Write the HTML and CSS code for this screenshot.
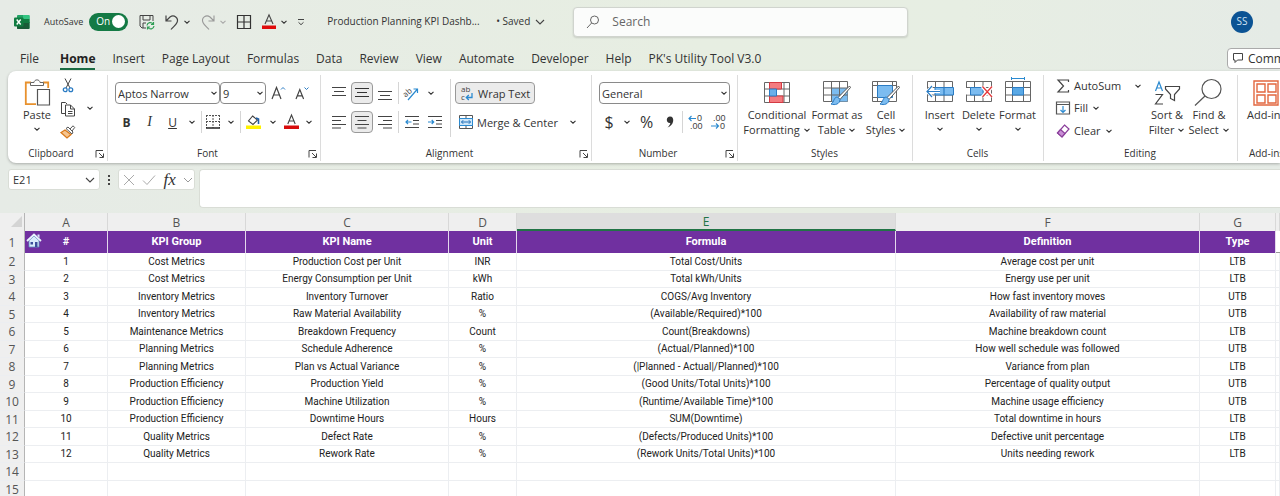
FILE: index.html
```html
<!DOCTYPE html>
<html lang="en">
<head>
<meta charset="utf-8">
<title>Production Planning KPI Dashboard</title>
<link rel="stylesheet" href="styles.css">
</head>
<body>
<svg class="defs" aria-hidden="true">
  <symbol id="chev" viewBox="0 0 8 8"><path d="M1.500 2.800 4 5.200 6.500 2.800" fill="none" stroke="currentColor" stroke-width="1.100"/></symbol>
  <symbol id="launch" viewBox="0 0 10 10"><path d="M1 8.500V1.500H8M4 4l4 4M8.500 4.500v4h-4" fill="none" stroke="currentColor" stroke-width="1"/></symbol>
  <symbol id="lines-c" viewBox="0 0 14 14"><path d="M0 2.500h14M2 6.500h10M0 10.500h14" stroke="currentColor"/></symbol>
</svg>

<header class="titlebar">
  <svg class="logo" width="16" height="16" viewBox="0 0 16 16"><rect x="3" y="1" width="12.500" height="14" rx="1" fill="#21a366"/><path d="M3 8h12.500v6a1 1 0 0 1-1 1H4a1 1 0 0 1-1-1z" fill="#185c37"/><path d="M9 1h5.500a1 1 0 0 1 1 1v3H9z" fill="#33c481"/><path d="M9 5h6.500v4H9z" fill="#107c41"/><rect y="3.500" width="9.500" height="9" rx="1" fill="#107c41"/><path d="M2.700 5.500l4 5M6.700 5.500l-4 5" stroke="#fff" stroke-width="1.400"/></svg>
  <label class="autosave"><span>AutoSave</span><span class="switch"><input type="checkbox" checked><span class="on">On</span></span></label>
  <div class="quick">
    <button aria-label="Save"><svg width="16" height="16" viewBox="0 0 16 16" fill="none" stroke="#444"><path d="M7 14H3L1 12V1.500h13V7M4 1.500V6h7V1.500M4 14V9h3"/><path d="M8 11.500a3.300 3.300 0 0 1 6-1.500M14.500 8v2.500H12M15 12a3.300 3.300 0 0 1-6 1.500M8.500 15.500V13H11" stroke="#2f9e55" stroke-width="1.200"/></svg></button>
    <button class="undo" aria-label="Undo"><svg width="16" height="16" viewBox="0 0 16 16" fill="none" stroke="#444" stroke-width="1.200"><path d="M2 1.500V7h5.500M2 7l4-4c4-3 9 1 7 5.500C12 11 9 13 7 15.500"/></svg><svg class="chev"><use href="#chev"/></svg></button>
    <button class="redo" aria-label="Redo"><svg width="16" height="16" viewBox="0 0 16 16" fill="none" stroke="#999" stroke-width="1.100"><path d="M14 1.500V7H8.500M14 7l-4-4C6 0 1 4 3 8.500 4 11 7 13 9 15.500"/></svg><svg class="chev"><use href="#chev"/></svg></button>
    <button aria-label="Borders"><svg width="16" height="16" viewBox="0 0 16 16" fill="none" stroke="#333" stroke-width="1.200"><path d="M1.500 1.500h13v13h-13zM8 1.500v13M1.500 8h13"/></svg></button>
    <button class="fontc" aria-label="Font color"><svg width="16" height="16" viewBox="0 0 16 16"><path d="M4 10 8 .8l4 9.200M5.400 7h5.200" fill="none" stroke="#444" stroke-width="1.100"/><path d="M1 11.500h14v3.500H1z" fill="#e00b0b"/></svg><svg class="chev"><use href="#chev"/></svg></button>
    <button aria-label="Customize toolbar"><svg width="8" height="10" viewBox="0 0 8 10" fill="none" stroke="#444"><path d="M1 2.500h6M1.500 5.300 4 7.700l2.500-2.400"/></svg></button>
  </div>
  <button class="doc">Production Planning KPI Dashb...<span>• Saved</span><svg width="10" height="8" viewBox="0 0 10 8"><path d="M1 2l4 4 4-4" fill="none" stroke="#444" stroke-width="1.100"/></svg></button>
  <label class="search"><svg width="14" height="14" viewBox="0 0 14 14" fill="none" stroke="#666"><circle cx="8.500" cy="5" r="4"/><path d="M5.600 8 1 13"/></svg><input type="search" placeholder="Search" aria-label="Search"></label>
  <button class="avatar">SS</button>
</header>

<nav class="tabs">
  <a href="#file">File</a><a href="#home" class="current">Home</a><a href="#insert">Insert</a><a href="#layout">Page Layout</a><a href="#formulas">Formulas</a><a href="#data">Data</a><a href="#review">Review</a><a href="#view">View</a><a href="#automate">Automate</a><a href="#developer">Developer</a><a href="#help">Help</a><a href="#pk">PK's Utility Tool V3.0</a>
  <button class="comments"><svg width="12" height="12" viewBox="0 0 12 12"><path d="M1.500 1.500h9v6.500H5.500L3 10.500V8H1.500z" fill="none" stroke="#444"/></svg>Comments</button>
</nav>

<main>
<section class="ribbon" aria-label="Home ribbon">
  <div class="group g-clip">
    <div class="body">
      <button class="big paste"><svg width="26" height="28" viewBox="0 0 26 28"><path d="M7 3.500H1.800v21.700H12" fill="none" stroke="#e8912d" stroke-width="1.800"/><path d="M19 3.500h5.200V9" fill="none" stroke="#e8912d" stroke-width="1.800"/><path d="M6.500 6.500V3.500H10c.3-3.500 5.700-3.500 6 0h3.500v3z" fill="#fff" stroke="#666"/><path d="M13.500 10.500h12v15.500h-12z" fill="#fff" stroke="#555" stroke-width="1.200"/></svg><span>Paste</span><svg class="chev"><use href="#chev"/></svg></button>
      <div class="stack">
        <button aria-label="Cut"><svg width="12" height="15" viewBox="0 0 12 15" fill="none"><path d="M3 .5 8 10M9 .5 4 10" stroke="#444"/><circle cx="3.200" cy="11.800" r="1.900" stroke="#2b7cc4" stroke-width="1.300"/><circle cx="8.800" cy="11.800" r="1.900" stroke="#2b7cc4" stroke-width="1.300"/></svg></button>
        <button aria-label="Copy"><svg width="16" height="16" viewBox="0 0 16 16" fill="#fff" stroke="#444"><path d="M5 12.500H1.500v-11h4L7 3"/><path d="M5.500 4h5l4 4v7h-9zM10.500 4v4h4M8 10.500h4.500M8 12.500h4.500"/></svg></button>
        <button aria-label="Format painter"><svg width="16" height="14" viewBox="0 0 16 14"><path d="M10 4l3-3.200 1.700 1.700L12 6M6 3.500l6 5.500 1-2-5-5z" fill="#fff" stroke="#555"/><path d="M5 5 1 7.500l6 5.500 4-3.500z" fill="#f6c58f" stroke="#d97b1e" stroke-width="1.300"/></svg></button>
      </div>
      <button class="chev-btn" aria-label="Copy options"><svg class="chev"><use href="#chev"/></svg></button>
    </div>
    <div class="foot"><span>Clipboard</span><button aria-label="Clipboard settings"><svg class="launch"><use href="#launch"/></svg></button></div>
  </div>

  <div class="group g-font">
    <div class="body rows">
      <div class="row">
        <span class="pick fontname"><select aria-label="Font"><option>Aptos Narrow</option></select><svg class="chev"><use href="#chev"/></svg></span>
        <span class="pick fontsize"><select aria-label="Font size"><option>9</option></select><svg class="chev"><use href="#chev"/></svg></span>
        <button class="w24" aria-label="Increase font size"><svg width="15" height="16" viewBox="0 0 15 16" fill="none"><path d="M1 14 5.500 2.500 10 14M2.600 10h5.800" stroke="#444" stroke-width="1.200"/><path d="M10 4.500 12 2.500l2 2" stroke="#2b7cc4"/></svg></button>
        <button class="w24" aria-label="Decrease font size"><svg width="14" height="16" viewBox="0 0 14 16" fill="none"><path d="M1 14 4.800 4.500 8.600 14M2.400 10.800h4.800" stroke="#444" stroke-width="1.200"/><path d="M9.500 2.500l2 2 2-2" stroke="#2b7cc4"/></svg></button>
      </div>
      <div class="row">
        <button class="w23 bold">B</button><button class="w23 ital">I</button><button class="w23 under">U</button><button class="w16" aria-label="Underline style"><svg class="chev"><use href="#chev"/></svg></button>
        <i class="bar"></i>
        <button class="w20" aria-label="Borders"><svg width="14" height="14" viewBox="0 0 14 14" stroke="#555"><path d="M0 .5h14M.5 0v13M13.500 0v13M7 0v13M0 6.500h14" stroke-dasharray="2 1"/><path d="M0 13h14" stroke-width="1.600" stroke="#222"/></svg></button><button class="w16" aria-label="Border style"><svg class="chev"><use href="#chev"/></svg></button>
        <i class="bar"></i>
        <button class="w23" aria-label="Fill color"><svg width="15" height="16" viewBox="0 0 15 16"><path d="M7 1.500 2.500 7 7 10.500 11.500 6 6.500 2" fill="none" stroke="#444" stroke-width="1.100"/><path d="M10 4l2.500 1v5" fill="none" stroke="#1f5fa8" stroke-width="1.600"/><path d="M0 11.500h15V15H0z" fill="#fff200"/></svg></button><button class="w16" aria-label="Choose fill"><svg class="chev"><use href="#chev"/></svg></button>
        <button class="w20" aria-label="Font color"><svg width="15" height="16" viewBox="0 0 15 16"><path d="M3.800 10 7.500 1l3.700 9M5 7h5" fill="none" stroke="#444" stroke-width="1.100"/><path d="M0 11.500h15V15H0z" fill="#d80c0c"/></svg></button><button class="w16" aria-label="Choose font color"><svg class="chev"><use href="#chev"/></svg></button>
      </div>
    </div>
    <div class="foot"><span>Font</span><button aria-label="Font settings"><svg class="launch"><use href="#launch"/></svg></button></div>
  </div>

  <div class="group g-align">
    <div class="body">
      <div class="rows">
        <div class="row">
          <button class="sq" aria-label="Top align"><svg width="14" height="14" viewBox="0 0 14 14" stroke="#444"><path d="M0 1.500h14M2 5.500h10M0 9.500h14"/></svg></button>
          <button class="sq pressed" aria-label="Middle align"><svg width="14" height="14"><use href="#lines-c"/></svg></button>
          <button class="sq" aria-label="Bottom align"><svg width="14" height="14" viewBox="0 0 14 14" stroke="#444"><path d="M0 5.500h14M2 9.500h10M0 13.500h14"/></svg></button>
          <i class="bar"></i>
          <button class="w23" aria-label="Orientation"><svg width="17" height="16" viewBox="0 0 17 16"><text x="0" y="10" class="tiny" transform="rotate(-42 5 8)">ab</text><path d="M5 15 14.500 4M10.500 4h4v4" fill="none" stroke="#2b8ad0" stroke-width="1.200"/></svg></button><button class="w16" aria-label="Orientation options"><svg class="chev"><use href="#chev"/></svg></button>
        </div>
        <div class="row">
          <button class="sq" aria-label="Align left"><svg width="14" height="14" viewBox="0 0 14 14" stroke="#444"><path d="M0 1.500h14M0 5.500h9M0 9.500h14M0 13h9"/></svg></button>
          <button class="sq pressed" aria-label="Center"><svg width="14" height="14" viewBox="0 0 14 14" stroke="#444"><path d="M0 1.500h14M2.500 5.500h9M0 9.500h14M2.500 13h9"/></svg></button>
          <button class="sq" aria-label="Align right"><svg width="14" height="14" viewBox="0 0 14 14" stroke="#444"><path d="M0 1.500h14M5 5.500h9M0 9.500h14M5 13h9"/></svg></button>
          <i class="bar"></i>
          <button class="w23" aria-label="Decrease indent"><svg width="14" height="14" viewBox="0 0 14 14" fill="none" stroke="#444"><path d="M0 1.500h14M8 5.500h6M8 9h6M0 12.500h14"/><path d="M6.500 7H1M3 5 1 7l2 2" stroke="#2b8ad0" stroke-width="1.200"/></svg></button>
          <button class="w23" aria-label="Increase indent"><svg width="14" height="14" viewBox="0 0 14 14" fill="none" stroke="#444"><path d="M0 1.500h14M8 5.500h6M8 9h6M0 12.500h14"/><path d="M0 7h5.500M3.700 5l2 2-2 2" stroke="#2b8ad0" stroke-width="1.200"/></svg></button>
        </div>
      </div>
      <i class="bar tall"></i>
      <div class="rows wrapcol">
        <div class="row"><button class="textbtn pressed"><svg width="14" height="16" viewBox="0 0 14 16"><text x="1" y="7" class="tiny">ab</text><text x="1" y="15" class="tiny">c</text><path d="M12 8v4.500H6.500M8.800 10l-2.500 2.500L8.800 15" fill="none" stroke="#2b8ad0" stroke-width="1.300"/></svg>Wrap Text</button></div>
        <div class="row"><button class="textbtn"><svg width="14" height="14" viewBox="0 0 14 14"><path d="M.5.5h13v13H.5zM7 .5v13" fill="#fff" stroke="#555"/><path d="M.5 3.500h13v7H.5z" fill="#cfe6f8" stroke="#2b8ad0"/><path d="M2.500 7h9M4.200 5.200 2.500 7l1.700 1.800M9.800 5.200 11.500 7 9.800 8.800" fill="none" stroke="#1e6fb8"/></svg>Merge &amp; Center</button><button class="w16" aria-label="Merge options"><svg class="chev"><use href="#chev"/></svg></button></div>
      </div>
    </div>
    <div class="foot"><span>Alignment</span><button aria-label="Alignment settings"><svg class="launch"><use href="#launch"/></svg></button></div>
  </div>

  <div class="group g-num">
    <div class="body rows">
      <div class="row"><span class="pick numfmt"><select aria-label="Number format"><option>General</option></select><svg class="chev"><use href="#chev"/></svg></span></div>
      <div class="row">
        <button class="w20 sym">$</button><button class="w16" aria-label="Currency options"><svg class="chev"><use href="#chev"/></svg></button><button class="w23 sym">%</button><button class="w23" aria-label="Comma style"><svg width="8" height="12" viewBox="0 0 8 12"><path d="M4 .5C6.500.5 7.500 2.500 7.200 5 6.800 8 4.500 10.500 1.500 11.500c1.500-1.500 2.600-3 2.800-4.500C2 7.300.8 5.500.8 3.800.8 2 2.200.5 4 .5z" fill="#333"/></svg></button>
        <i class="bar"></i>
        <button class="w23" aria-label="Increase decimal"><svg width="15" height="16" viewBox="0 0 15 16"><text x="9" y="7" class="digit">0</text><text x="2" y="15" class="digit">.00</text><path d="M8 4.500H1M3.500 2 1 4.500 3.500 7" fill="none" stroke="#2b8ad0" stroke-width="1.100"/></svg></button>
        <button class="w23" aria-label="Decrease decimal"><svg width="15" height="16" viewBox="0 0 15 16"><text x="2" y="7" class="digit">.00</text><text x="9" y="15" class="digit">0</text><path d="M0 12h7.500M5 9.500 7.500 12 5 14.500" fill="none" stroke="#2b8ad0" stroke-width="1.100"/></svg></button>
      </div>
    </div>
    <div class="foot"><span>Number</span><button aria-label="Number settings"><svg class="launch"><use href="#launch"/></svg></button></div>
  </div>

  <div class="group g-styles">
    <div class="body">
      <button class="big w62"><svg width="26" height="24" viewBox="0 0 26 24"><path d="M.5 1.500h25v20H.5zM.5 8h25M.5 15h25M5.500 1.500v20M20 1.500v20" fill="#fff" stroke="#666"/><path d="M5.500 1.500h12V8h-12zM5.500 15H19v6.500H5.500z" fill="#f47c80" stroke="#d33a42"/><path d="M5.500 8h7v7h-7z" fill="#6ab0ea" stroke="#2b7cc4"/></svg><span>Conditional<br>Formatting <svg class="chev"><use href="#chev"/></svg></span></button>
      <button class="big w56"><svg width="28" height="26" viewBox="0 0 28 26"><path d="M.5 1.500h24v20H.5z" fill="#fff" stroke="#666"/><path d="M8.500 8h16v13.500h-16z" fill="#7cbcf0"/><path d="M.5 8h24M.5 15h24M8.500 1.500v20M16.500 1.500v20" fill="none" stroke="#666"/><path d="M26.500 6 15 17.500l2 2L27.500 7.500z" fill="#fff" stroke="#555"/><path d="M14.500 17c-4 0-3 5-6.500 7 4 1.500 9 0 9-4.500z" fill="#7cbcf0" stroke="#2b7cc4"/></svg><span>Format as<br>Table <svg class="chev"><use href="#chev"/></svg></span></button>
      <button class="big w40"><svg width="28" height="26" viewBox="0 0 28 26"><path d="M.5 1.500h24v20H.5z" fill="#fff" stroke="#666"/><path d="M5.500 5.500h15v12h-15z" fill="#7cbcf0" stroke="#2b7cc4"/><path d="M.5 5.500h5M20 5.500h5M.5 17.500h5M5.500 1.500v4M20.500 1.500v4M5.500 17.500v4" stroke="#666"/><path d="M26.500 6 15 17.500l2 2L27.500 7.500z" fill="#fff" stroke="#555"/><path d="M14.500 17c-4 0-3 5-6.500 7 4 1.500 9 0 9-4.500z" fill="#7cbcf0" stroke="#2b7cc4"/></svg><span>Cell<br>Styles <svg class="chev"><use href="#chev"/></svg></span></button>
    </div>
    <div class="foot"><span>Styles</span></div>
  </div>

  <div class="group g-cells">
    <div class="body">
      <button class="big w39"><svg width="28" height="26" viewBox="0 0 28 26"><path d="M1.500 1.500h25v20h-25zM1.500 7.500h25M1.500 15h25M9.500 1.500v20M18 1.500v20" fill="#fff" stroke="#666"/><path d="M9 7.500h18.500V15H9z" fill="#7cbcf0" stroke="#2b7cc4"/><path d="M14 11.500H1M6 6l-5 5.500L6 17" fill="none" stroke="#fff" stroke-width="3"/><path d="M14 11.500H1M6 6l-5 5.500L6 17M18 7.500V15" fill="none" stroke="#2b7cc4" stroke-width="1.200"/></svg><span>Insert</span><svg class="chev"><use href="#chev"/></svg></button>
      <button class="big w39"><svg width="28" height="26" viewBox="0 0 28 26"><path d="M1.500 1.500h25v20h-25zM1.500 7.500h25M1.500 15h25M9.500 1.500v20M18 1.500v20" fill="#fff" stroke="#666"/><path d="M0 8h5v6.500H0z" fill="#fff"/><path d="M5.500 7.500H18V15H5.500z" fill="#7cbcf0" stroke="#2b7cc4"/><path d="M17.500 6.500 27 17M27 6.500 17.500 17" stroke="#fff" stroke-width="4"/><path d="M17.500 6.500 27 17M27 6.500 17.500 17" stroke="#e5383b" stroke-width="1.300"/></svg><span>Delete</span><svg class="chev"><use href="#chev"/></svg></button>
      <button class="big w39"><svg width="28" height="26" viewBox="0 0 28 26"><path d="M1.500 1.500h25v20h-25zM1.500 7.500h25M1.500 15h25M8.500 1.500v20M19.500 1.500v20" fill="#fff" stroke="#666"/><path d="M8.500 7.500h11V15h-11z" fill="#5aa9e6" stroke="#2b7cc4"/><path d="M7-1.500h14M7.500-3v3M20.500-3v3" stroke="#2b8ad0"/></svg><span>Format</span><svg class="chev"><use href="#chev"/></svg></button>
    </div>
    <div class="foot"><span>Cells</span></div>
  </div>

  <div class="group g-edit">
    <div class="body">
      <div class="cmds">
        <div class="row"><button><svg width="14" height="14" viewBox="0 0 14 14"><path d="M12.500 3V1H2l5.500 6L2 13h10.500v-2" fill="none" stroke="#444" stroke-width="1.200"/></svg>AutoSum</button><button class="chev-btn" aria-label="AutoSum options"><svg class="chev"><use href="#chev"/></svg></button></div>
        <button><svg width="14" height="14" viewBox="0 0 14 14" fill="none"><path d="M.5 1h13v12H.5zM.5 3.500h13" stroke="#555" stroke-width="1.200"/><path d="M7 5v6.500M4.500 9 7 11.500 9.500 9" stroke="#2b8ad0" stroke-width="1.200"/></svg>Fill<svg class="chev"><use href="#chev"/></svg></button>
        <button><svg width="14" height="14" viewBox="0 0 14 14"><path d="M8.500 1 13 5 6 13 1.500 9z" fill="#fff" stroke="#8b3f9b" stroke-width="1.200"/><path d="M4.500 5.500 9 9.500 6 13 1.500 9z" fill="#c98fd6" stroke="#8b3f9b" stroke-width="1.200"/></svg>Clear<svg class="chev"><use href="#chev"/></svg></button>
      </div>
      <button class="big w42"><svg width="26" height="26" viewBox="0 0 26 26" fill="none"><path d="M1.500 11 5 2l3.500 9M2.500 8h5" stroke="#2b8ad0" stroke-width="1.200"/><path d="M1.500 14.500h7l-7 9.500h7.500" stroke="#444" stroke-width="1.200"/><path d="M11.500 6.500h14v2.500l-5 5.500v6l-4-2v-4l-5-5.500z" stroke="#444" stroke-width="1.200"/></svg><span>Sort &amp;<br>Filter <svg class="chev"><use href="#chev"/></svg></span></button>
      <button class="big w42"><svg width="28" height="28" viewBox="0 0 28 28" fill="none" stroke="#555" stroke-width="1.200"><circle cx="16.500" cy="10" r="9.500"/><path d="M10 17 0 26.500"/></svg><span>Find &amp;<br>Select <svg class="chev"><use href="#chev"/></svg></span></button>
    </div>
    <div class="foot"><span>Editing</span></div>
  </div>

  <div class="group g-add">
    <div class="body">
      <button class="big"><svg width="26" height="26" viewBox="0 0 26 26" fill="none" stroke="#e2673f" stroke-width="1.400"><path d="M1 1h24v24H1zM4 4h8v8H4zM15 4h8v8h-8zM4 15h8v8H4zM15 15h8v8h-8z"/></svg><span>Add-ins</span></button>
    </div>
    <div class="foot"><span>Add-ins</span></div>
  </div>
</section>

<section class="formula">
  <span class="namebox"><input value="E21" aria-label="Name box"><svg width="10" height="8" viewBox="0 0 10 8"><path d="M1 2l4 4 4-4" fill="none" stroke="#444" stroke-width="1.100"/></svg></span>
  <svg class="dots" width="4" height="12" viewBox="0 0 4 12"><path d="M1 1h2v2H1zM1 5h2v2H1zM1 9h2v2H1z" fill="#444"/></svg>
  <div class="fx">
    <button aria-label="Cancel"><svg width="12" height="12" viewBox="0 0 12 12"><path d="M1 1l10 10M11 1 1 11" stroke="#aaa"/></svg></button>
    <button aria-label="Enter"><svg width="14" height="12" viewBox="0 0 14 12"><path d="M1 6.500 5 10.500 13 1.500" fill="none" stroke="#aaa"/></svg></button>
    <button class="fxname" aria-label="Insert function">fx</button>
    <button aria-label="Function history"><svg width="10" height="8" viewBox="0 0 10 8"><path d="M1 2l4 4 4-4" fill="none" stroke="#999"/></svg></button>
  </div>
  <textarea aria-label="Formula bar"></textarea>
</section>

<table class="sheet">
  <colgroup><col class="c-n"><col class="c-a"><col class="c-b"><col class="c-c"><col class="c-d"><col><col class="c-f"><col class="c-g"><col class="c-h"></colgroup>
  <thead>
    <tr class="letters"><th><svg width="11" height="11" viewBox="0 0 11 11"><path d="M11 0v11H0z" fill="#d4d4d4"/></svg></th><th>A</th><th>B</th><th>C</th><th>D</th><th class="sel">E</th><th>F</th><th>G</th><th></th></tr>
    <tr class="fields"><th class="n">1</th><th class="first"><a href="#dashboard" aria-label="Home"><svg width="16" height="15" viewBox="0 0 16 15"><path d="M3 7.500V14h10V7.500L8 3z" fill="#d9ecfb" stroke="#5a8fc0" stroke-width=".8"/><path d="M1 8 8 1.500 15 8" fill="none" stroke="#e9f4fd" stroke-width="1.800"/><path d="M11.500 1.500h2V5l-2-2z" fill="#d9ecfb"/><path d="M4.500 9h2.500v2.500H4.500zM9 9h2.500v5H9z" fill="#3b4f9a"/></svg></a>#</th><th>KPI Group</th><th>KPI Name</th><th>Unit</th><th>Formula</th><th>Definition</th><th>Type</th><td></td></tr>
  </thead>
  <tbody>
    <tr><th>2</th><td>1</td><td>Cost Metrics</td><td>Production Cost per Unit</td><td>INR</td><td>Total Cost/Units</td><td>Average cost per unit</td><td>LTB</td><td></td></tr>
    <tr><th>3</th><td>2</td><td>Cost Metrics</td><td>Energy Consumption per Unit</td><td>kWh</td><td>Total kWh/Units</td><td>Energy use per unit</td><td>LTB</td><td></td></tr>
    <tr><th>4</th><td>3</td><td>Inventory Metrics</td><td>Inventory Turnover</td><td>Ratio</td><td>COGS/Avg Inventory</td><td>How fast inventory moves</td><td>UTB</td><td></td></tr>
    <tr><th>5</th><td>4</td><td>Inventory Metrics</td><td>Raw Material Availability</td><td>%</td><td>(Available/Required)*100</td><td>Availability of raw material</td><td>UTB</td><td></td></tr>
    <tr><th>6</th><td>5</td><td>Maintenance Metrics</td><td>Breakdown Frequency</td><td>Count</td><td>Count(Breakdowns)</td><td>Machine breakdown count</td><td>LTB</td><td></td></tr>
    <tr><th>7</th><td>6</td><td>Planning Metrics</td><td>Schedule Adherence</td><td>%</td><td>(Actual/Planned)*100</td><td>How well schedule was followed</td><td>UTB</td><td></td></tr>
    <tr><th>8</th><td>7</td><td>Planning Metrics</td><td>Plan vs Actual Variance</td><td>%</td><td>(|Planned - Actual|/Planned)*100</td><td>Variance from plan</td><td>LTB</td><td></td></tr>
    <tr><th>9</th><td>8</td><td>Production Efficiency</td><td>Production Yield</td><td>%</td><td>(Good Units/Total Units)*100</td><td>Percentage of quality output</td><td>UTB</td><td></td></tr>
    <tr><th>10</th><td>9</td><td>Production Efficiency</td><td>Machine Utilization</td><td>%</td><td>(Runtime/Available Time)*100</td><td>Machine usage efficiency</td><td>UTB</td><td></td></tr>
    <tr><th>11</th><td>10</td><td>Production Efficiency</td><td>Downtime Hours</td><td>Hours</td><td>SUM(Downtime)</td><td>Total downtime in hours</td><td>LTB</td><td></td></tr>
    <tr><th>12</th><td>11</td><td>Quality Metrics</td><td>Defect Rate</td><td>%</td><td>(Defects/Produced Units)*100</td><td>Defective unit percentage</td><td>LTB</td><td></td></tr>
    <tr><th>13</th><td>12</td><td>Quality Metrics</td><td>Rework Rate</td><td>%</td><td>(Rework Units/Total Units)*100</td><td>Units needing rework</td><td>LTB</td><td></td></tr>
    <tr><th>14</th><td></td><td></td><td></td><td></td><td></td><td></td><td></td><td></td></tr>
    <tr><th>15</th><td></td><td></td><td></td><td></td><td></td><td></td><td></td><td></td></tr>
  </tbody>
</table>
</main>
</body>
</html>
```

FILE: styles.css
```css
* { box-sizing: border-box; }
html { overflow: hidden; }
body {
  margin: 0;
  background: linear-gradient(90deg, #e6ebe6, #e7eee2 55%, #e7eee3 75%, #e5ebe6);
  color: #333;
  font: 12px/15px "Open Sans", "Noto Sans", sans-serif;
  overflow: hidden;
}
button, input, select, textarea { font: inherit; color: inherit; border: 0; background: none; padding: 0; margin: 0; }
button { display: flex; align-items: center; justify-content: center; white-space: nowrap; }
a { color: inherit; text-decoration: none; }
svg { flex: none; overflow: visible; }
.defs { display: none; }
.chev { width: 8px; height: 8px; color: #333; }
.launch { width: 10px; height: 10px; color: #444; }
.tiny { font: 8px "Open Sans", sans-serif; fill: #444; }
.digit { font: 9px "Liberation Sans", sans-serif; fill: #444; }

/* Title bar */
.titlebar { display: flex; align-items: center; height: 43px; padding: 0 27px 0 14px; }
.autosave { display: flex; align-items: center; gap: 6px; margin-left: 14px; font-size: 9px; }
.switch { display: grid; width: 39px; height: 18px; border-radius: 9px; background: #147a45; color: #fff; align-items: center; }
.switch input, .switch .on { grid-area: 1 / 1; }
.switch .on { padding-left: 7px; font-size: 10px; }
.switch input { appearance: none; width: 13px; height: 13px; border-radius: 50%; background: #fff; justify-self: end; margin-right: 3px; }
.quick { display: flex; align-items: center; gap: 9px; margin-left: 11px; }
.quick button { gap: 3px; }
.quick .redo .chev { color: #aaa; }
.doc { margin-left: 22px; width: 218px; justify-content: flex-start; font-size: 10px; }
.doc span { margin-left: auto; margin-right: 5px; }
.search {
  display: flex; align-items: center; gap: 12px;
  flex: 0 1 335px; height: 30px; margin-left: 28px; padding: 0 12px;
  background: #fbfcfb; border: 1px solid #d0d4ce; border-radius: 4px; box-shadow: 0 1px 2px #0002;
}
.search input { flex: 1; min-width: 0; outline: 0; font-size: 12px; }
.search input::placeholder { color: #666; opacity: 1; }
.avatar { margin-left: auto; width: 22px; height: 22px; border-radius: 50%; background: #0b5394; color: #cfe2f3; font-size: 10px; }

/* Tabs */
.tabs { display: flex; align-items: center; height: 28px; padding-left: 20px; gap: 17px; white-space: nowrap; padding-top: 2px; }
.tabs a { padding: 5px 0 2px; border-bottom: 2px solid transparent; }
.tabs .current { margin-left: 4px; font-weight: 700; border-color: #1a6b43; color: #222; }
.tabs .comments { margin-left: auto; margin-right: -36px; height: 21px; gap: 4px; padding: 0 6px 0 4px; background: #fff; border: 1px solid #aaa; border-radius: 4px; }

/* Ribbon */
.ribbon { display: flex; margin-left: 8px; padding: 4px 0 2px; background: #fff; border-radius: 8px 0 0 8px; box-shadow: 0 1px 3px #0004; overflow: hidden; }
.group { flex: none; display: flex; flex-direction: column; border-right: 1px solid #dcdcdc; }
.group:last-child { border: 0; }
.body { display: flex; align-items: flex-start; height: 71px; }
.rows { display: flex; flex-direction: column; align-items: stretch; gap: 7px; padding-top: 7px; }
.row { display: flex; align-items: center; height: 22px; }
.foot { display: flex; align-items: center; height: 15px; padding-right: 1px; font-size: 10px; }
.foot span { flex: 1; text-align: center; }
.foot button { width: 12px; }

.g-clip { width: 100px; }
.g-font { width: 213px; }
.g-align { width: 271px; }
.g-num { width: 146px; }
.g-styles { width: 175px; }
.g-cells { width: 131px; }
.g-edit { width: 194px; }
.g-add { width: 58px; }
.g-clip .body { padding-left: 16px; }
.g-font .body { padding-left: 7px; }
.g-align .body { padding-left: 7px; }
.g-num .body { padding-left: 7px; }
.g-styles .body { padding-left: 8px; gap: 1px; }
.g-cells .body { padding-left: 7px; }
.g-edit .body { padding-left: 12px; }
.g-add .body { padding-left: 9px; }

.big { flex-direction: column; justify-content: flex-start; padding-top: 4px; }
.big > svg:first-child { height: 28px; }
.big > span { line-height: 15px; text-align: center; font-size: 11px; }
.big > .chev { margin-top: 3px; }
.paste { width: 26px; }
.stack { display: flex; flex-direction: column; gap: 2px; margin-left: 10px; }
.stack button { width: 16px; height: 21px; }
.chev-btn { width: 16px; height: 22px; }
.g-clip .chev-btn { margin: 22px 0 0 6px; }

.pick { display: grid; align-items: center; height: 22px; border: 1px solid #8a8a8a; border-radius: 4px; font-size: 11px; }
.pick select, .pick svg { grid-area: 1 / 1; }
.pick select { appearance: none; padding-left: 2px; height: 20px; outline: 0; }
.pick svg { justify-self: end; margin-right: 1px; pointer-events: none; }
.fontname { width: 105px; }
.fontsize { width: 46px; }
.numfmt { width: 131px; }
.w16 { width: 16px; }
.w20 { width: 20px; }
.w23 { width: 23px; }
.w24 { width: 24px; }
.w39 { width: 39px; }
.w40 { width: 40px; }
.w42 { width: 42px; }
.w56 { width: 56px; }
.w62 { width: 62px; }
.bold { font-weight: 700; }
.ital { font: italic 14px "Liberation Serif", serif; }
.under { text-decoration: underline; }
.sym { font-size: 16px; }
.bar { width: 1px; height: 22px; margin: 0 1px; background: #d5d5d5; }
.tall { height: 58px; margin: 4px 4px 0; }
.sq { width: 22px; height: 22px; margin-right: 1px; border: 1px solid transparent; border-radius: 4px; }
.pressed { background: #ebebeb; border: 1px solid #999; }
.textbtn { gap: 4px; height: 22px; padding: 0 4px; border-radius: 4px; font-size: 11px; }
.wrapcol .w16 { margin-left: 3px; }
.cmds { display: flex; flex-direction: column; align-items: flex-start; width: 90px; font-size: 11px; }
.cmds button { gap: 4px; height: 23px; }
.cmds .row { align-self: stretch; justify-content: space-between; height: 21px; }
.cmds .row button { height: 21px; }

/* Formula bar */
.formula { display: flex; align-items: flex-start; padding: 6px 0 5px 8px; }
.namebox, .fx { display: flex; align-items: center; height: 21px; background: #fff; border: 1px solid #d9ddd6; border-radius: 3px; }
.namebox { width: 92px; padding: 0 4px; font-size: 11px; }
.namebox input { flex: 1; min-width: 0; outline: 0; }
.dots { margin: 5px 7px 0; }
.fx { width: 77px; justify-content: space-between; padding: 0 1px 0 4px; }
.fxname { font: italic 17px "Liberation Serif", serif; }
.formula textarea { flex: 1; height: 39px; margin-left: 4px; background: #fff; border: 1px solid #d9ddd6; border-right: 0; border-radius: 4px 0 0 4px; resize: none; outline: 0; }

/* Sheet */
.sheet { width: 100%; table-layout: fixed; border-collapse: separate; border-spacing: 0; background: #fff; text-align: center; font: 10px/12px Roboto, sans-serif; color: #222; }
.sheet th, .sheet td { padding: 0; overflow: hidden; white-space: nowrap; }
.c-n { width: 25px; }
.c-a { width: 83px; }
.c-b { width: 138px; }
.c-c { width: 203px; }
.c-d { width: 68px; }
.c-f { width: 304px; }
.c-g { width: 76px; }
.c-h { width: 4px; }
.letters th { height: 18px; background: #efefef; border-right: 1px solid #d8d8d8; color: #555; font: 12px/15px "Open Sans", sans-serif; }
.letters th:first-child { text-align: right; padding-right: 2px; }
.letters .sel { background: #dedede; color: #217346; border-bottom: 2px solid #217346; }
.sheet tr th:first-child { border-right: 1px solid #b5b5b5; }
.fields th { height: 22px; background: #7030a0; border-right: 1px solid #e4d8ec; color: #fff; font-weight: 700; font-size: 11px; }
.fields .n, tbody th { background: #efefef; color: #555; font: 12px/15px "Open Sans", sans-serif; }
.fields td { border-bottom: 1px solid #999; }
.first { position: relative; }
.first a { position: absolute; left: 1px; top: 2px; }
tbody th, tbody td { height: 17px; border-bottom: 1px solid #eceef1; border-right: 1px solid #eceef1; }
tbody tr:nth-child(odd) > * { height: 18px; }
```
